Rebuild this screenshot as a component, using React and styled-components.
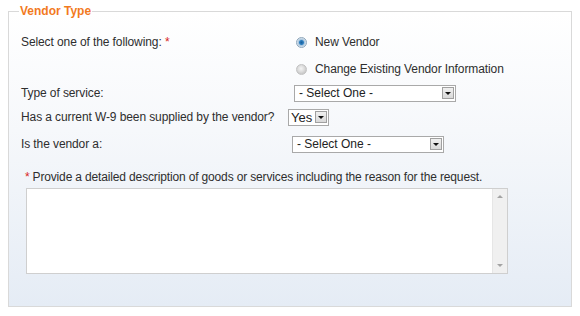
import React from 'react'
import styled, { createGlobalStyle } from 'styled-components'

const Global = createGlobalStyle`
  html, body {
    margin: 0;
    padding: 0;
    background: #ffffff;
  }
  body {
    font-family: 'Liberation Sans', Arial, sans-serif;
    font-size: 12px;
    color: #2e2e2e;
  }
`

const Page = styled.div`
  width: 580px;
  height: 316px;
  padding: 4px 8px 0 8px;
  box-sizing: border-box;
`

const Fieldset = styled.fieldset`
  margin: 0;
  height: 303px;
  box-sizing: border-box;
  border: 1px solid #d9d9d9;
  padding: 0 12px 0 11px;
  background: linear-gradient(180deg, #ffffff 0%, #f6f8fb 40%, #e5ecf5 100%);
  min-width: 0;
`

const Legend = styled.legend`
  padding: 0 1px;
  margin-left: -1px;
  color: #f27a1f;
  font-weight: bold;
  font-size: 12px;
  line-height: 15px;
`

const Row = styled.div`
  display: flex;
  align-items: center;
  height: ${p => p.$h}px;
`

const Label = styled.div`
  width: 267px;
  flex-shrink: 0;
  padding-left: 1px;
  letter-spacing: -0.1px;
`

const Req = styled.span`
  color: #d8261c;
`

const Control = styled.div`
  display: flex;
  align-items: center;
  margin-left: ${p => p.$offset || 0}px;
`

const RadioDot = styled.span`
  width: 11px;
  height: 11px;
  border-radius: 50%;
  box-sizing: border-box;
  border: 1px solid ${p => (p.$on ? '#8ea6ba' : '#c2c2c2')};
  background: ${p =>
    p.$on
      ? 'radial-gradient(circle at 50% 50%, #1a5f9c 0, #2d7fc0 2px, #a9c6de 3px, #e8eef4 5px)'
      : 'radial-gradient(circle at 45% 40%, #f4f4f4 0, #dedede 3px, #cbcbcb 5px)'};
  margin-right: 8px;
`

const RadioText = styled.span`
  letter-spacing: -0.1px;
`

const Select = styled.div`
  display: flex;
  align-items: center;
  width: ${p => p.$w}px;
  height: ${p => p.$hgt || 17}px;
  box-sizing: border-box;
  border: 1px solid #a9a9a9;
  background: #ffffff;
  padding: 0 1px 0 ${p => p.$pl ?? 4}px;
  font-size: ${p => p.$fs || 12}px;
  color: #222;
`

const SelectText = styled.span`
  flex: 1;
  white-space: nowrap;
`

const Arrow = styled.span`
  width: 12px;
  height: 12px;
  box-sizing: border-box;
  border: 1px solid #a0a0a0;
  background: linear-gradient(180deg, #f0f0f0, #d9d9d9);
  display: flex;
  align-items: center;
  justify-content: center;
  &::after {
    content: '';
    border-left: 3px solid transparent;
    border-right: 3px solid transparent;
    border-top: 3px solid #111;
  }
`

const DescLabel = styled.div`
  padding-left: 5px;
  height: 22px;
  display: flex;
  align-items: center;
  letter-spacing: -0.15px;
  margin-top: 9px;
`

const TextBox = styled.div`
  margin-left: 6px;
  width: 482px;
  height: 86px;
  box-sizing: border-box;
  border: 1px solid #cfcfcf;
  background: #ffffff;
  display: flex;
`

const Area = styled.textarea`
  flex: 1;
  border: none;
  outline: none;
  resize: none;
  background: transparent;
  font-family: 'Liberation Sans', Arial, sans-serif;
  font-size: 12px;
  padding: 2px;
`

const Scroll = styled.div`
  width: 15px;
  background: #f0f0f0;
  border-left: 1px solid #e6e6e6;
  display: flex;
  flex-direction: column;
  justify-content: space-between;
  align-items: center;
  padding: 6px 0;
  box-sizing: border-box;
`

const ScrollArrow = styled.span`
  border-left: 3px solid transparent;
  border-right: 3px solid transparent;
  ${p =>
    p.$up ? 'border-bottom: 3px solid #a3a3a3;' : 'border-top: 3px solid #a3a3a3;'}
`

export default function App() {
  return (
    <Page>
      <Global />
      <Fieldset>
        <Legend>Vendor Type</Legend>
        <Row $h={26} style={{ marginTop: 10 }}>
          <Label>
            Select one of the following: <Req>*</Req>
          </Label>
          <Control $offset={8}>
            <RadioDot $on />
            <RadioText>New Vendor</RadioText>
          </Control>
        </Row>
        <Row $h={28}>
          <Label />
          <Control $offset={8}>
            <RadioDot />
            <RadioText>Change Existing Vendor Information</RadioText>
          </Control>
        </Row>
        <Row $h={20}>
          <Label>Type of service:</Label>
          <Control $offset={6}>
            <Select $w={162}>
              <SelectText>- Select One -</SelectText>
              <Arrow />
            </Select>
          </Control>
        </Row>
        <Row $h={28}>
          <Label>Has a current W-9 been supplied by the vendor?</Label>
          <Control $offset={0}>
            <Select $w={41} $fs={13} $pl={2}>
              <SelectText>Yes</SelectText>
              <Arrow />
            </Select>
          </Control>
        </Row>
        <Row $h={26}>
          <Label>Is the vendor a:</Label>
          <Control $offset={4}>
            <Select $w={152}>
              <SelectText>- Select One -</SelectText>
              <Arrow />
            </Select>
          </Control>
        </Row>
        <DescLabel>
          <Req style={{ marginRight: 3 }}>*</Req>
          Provide a detailed description of goods or services including the reason for the request.
        </DescLabel>
        <TextBox>
          <Area aria-label="Description" />
          <Scroll>
            <ScrollArrow $up />
            <ScrollArrow />
          </Scroll>
        </TextBox>
      </Fieldset>
    </Page>
  )
}
